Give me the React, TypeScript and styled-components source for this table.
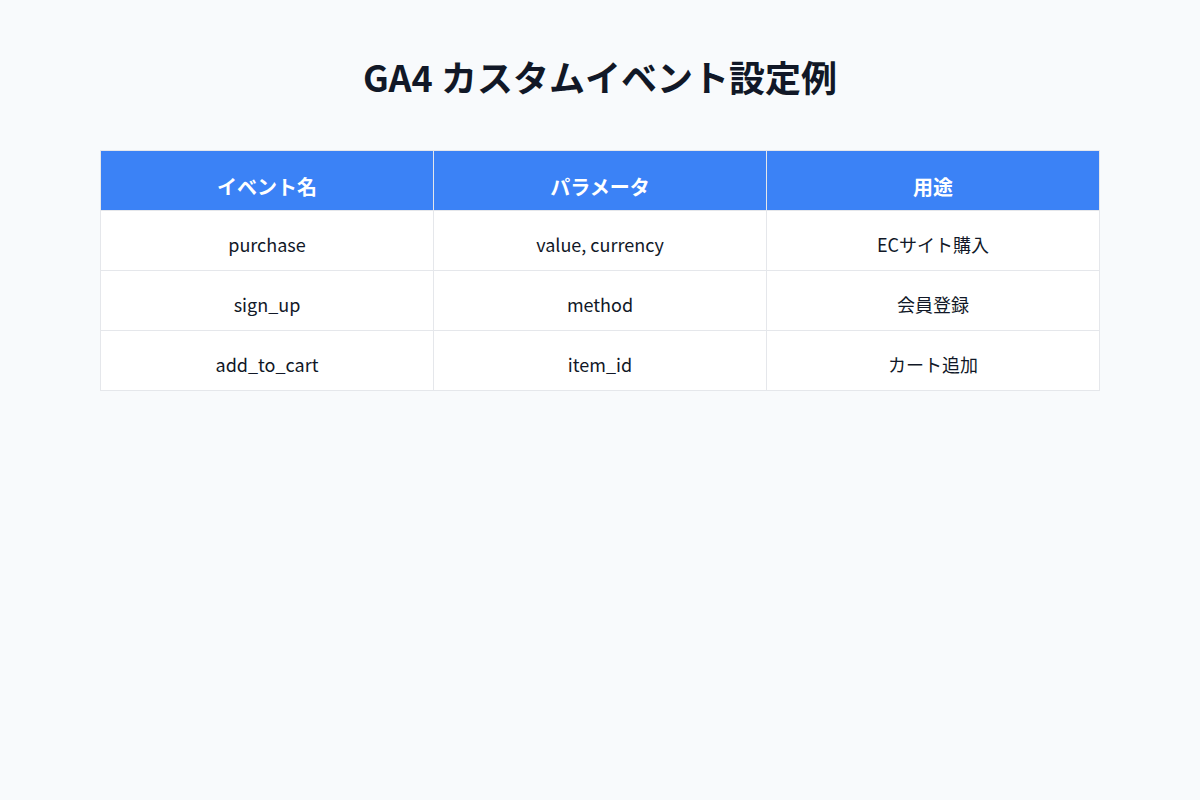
import React from 'react';
import styled, { createGlobalStyle } from 'styled-components';

const GlobalStyle = createGlobalStyle`
  html, body {
    margin: 0;
    padding: 0;
    background: #f8fafc;
  }
  body {
    font-family: "Noto Sans CJK JP", "Noto Sans", sans-serif;
    color: #111827;
  }
`;

const Page = styled.div`
  width: 1200px;
  height: 800px;
  padding: 50px 100px 0;
  box-sizing: border-box;
`;

const Title = styled.h1`
  margin: 0 0 48px;
  text-align: center;
  font-size: 36px;
  font-weight: 700;
  line-height: 52px;
  color: #111827;
`;

const Table = styled.table`
  width: 100%;
  border-collapse: collapse;
  table-layout: fixed;
  background: #ffffff;
`;

const HeadCell = styled.th`
  height: 59px;
  box-sizing: border-box;
  padding: 22px 16px 9px;
  background: #3b82f6;
  color: #ffffff;
  font-size: 20px;
  font-weight: 700;
  line-height: 28px;
  text-align: center;
  border: 1px solid #e5e7eb;
`;

const Cell = styled.td`
  height: 60px;
  box-sizing: border-box;
  padding: 19px 16px 13px;
  font-size: 18px;
  line-height: 26px;
  text-align: center;
  color: #111827;
  border: 1px solid #e5e7eb;
`;

const columns = ['イベント名', 'パラメータ', '用途'];

const rows = [
  ['purchase', 'value, currency', 'ECサイト購入'],
  ['sign_up', 'method', '会員登録'],
  ['add_to_cart', 'item_id', 'カート追加'],
];

export default function App() {
  return (
    <>
      <GlobalStyle />
      <Page>
        <Title>GA4 カスタムイベント設定例</Title>
        <Table>
          <thead>
            <tr>
              {columns.map((c) => (
                <HeadCell key={c}>{c}</HeadCell>
              ))}
            </tr>
          </thead>
          <tbody>
            {rows.map((r) => (
              <tr key={r[0]}>
                {r.map((v) => (
                  <Cell key={v}>{v}</Cell>
                ))}
              </tr>
            ))}
          </tbody>
        </Table>
      </Page>
    </>
  );
}
